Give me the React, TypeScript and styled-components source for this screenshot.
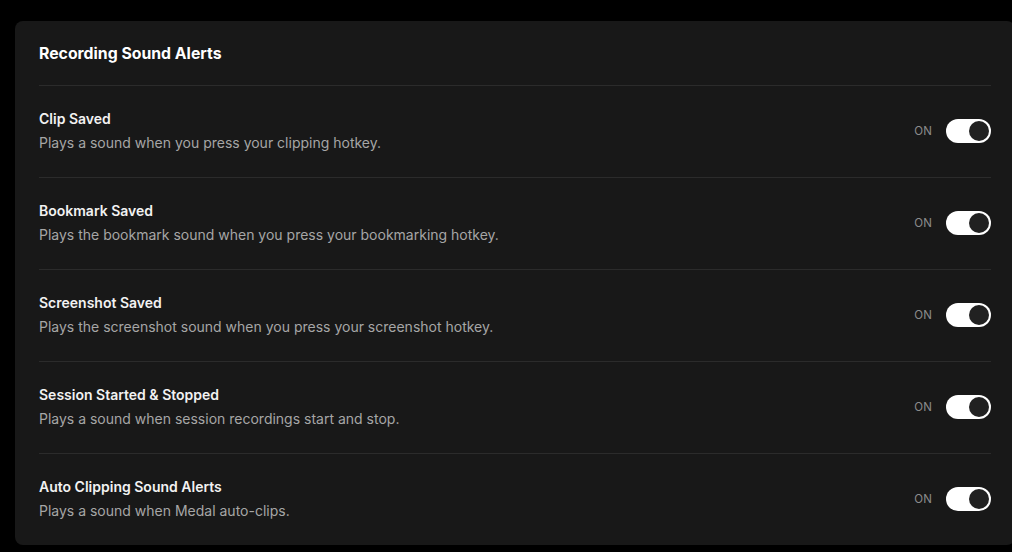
import React, { FC, useState } from 'react'
import styled, { createGlobalStyle } from 'styled-components'

const GlobalStyle = createGlobalStyle`
  html, body {
    margin: 0;
    padding: 0;
    background: #000;
    overflow: hidden;
  }
  body {
    font-family: Inter, "Noto Sans", sans-serif;
    -webkit-font-smoothing: antialiased;
  }
`

type Alert = {
  title: string
  description: string
}

const alerts: Alert[] = [
  { title: 'Clip Saved', description: 'Plays a sound when you press your clipping hotkey.' },
  {
    title: 'Bookmark Saved',
    description: 'Plays the bookmark sound when you press your bookmarking hotkey.',
  },
  {
    title: 'Screenshot Saved',
    description: 'Plays the screenshot sound when you press your screenshot hotkey.',
  },
  {
    title: 'Session Started & Stopped',
    description: 'Plays a sound when session recordings start and stop.',
  },
  { title: 'Auto Clipping Sound Alerts', description: 'Plays a sound when Medal auto-clips.' },
]

const StyledPage = styled.div`
  padding: 21px 0 0 15px;
  overflow: hidden;
`

// the card runs off the right edge of the window in the original
const StyledCard = styled.section`
  width: 1000px;
  background: #181818;
  border-radius: 8px;
  padding: 0 24px;
  box-sizing: border-box;
`

const StyledHeader = styled.h2`
  margin: 0;
  height: 64px;
  display: flex;
  align-items: center;
  font-size: 15.8px;
  font-weight: 700;
  color: #fff;
  border-bottom: 1px solid #2b2b2b;
`

const StyledRow = styled.div<{ $last: boolean }>`
  height: 89px;
  padding-bottom: 2px;
  display: flex;
  align-items: center;
  justify-content: space-between;
  border-bottom: ${p => (p.$last ? 'none' : '1px solid #2b2b2b')};
`

const StyledText = styled.div`
  display: flex;
  flex-direction: column;
  gap: 4px;
`

const StyledTitle = styled.div`
  font-size: 14px;
  line-height: 20px;
  font-weight: 600;
  color: #f2f2f2;
`

const StyledDescription = styled.div`
  font-size: 14px;
  line-height: 20px;
  color: #a6a6a6;
`

const StyledControl = styled.div`
  display: flex;
  align-items: center;
  gap: 14px;
`

const StyledState = styled.span`
  font-size: 11.5px;
  color: #8c8c8c;
  letter-spacing: 0.2px;
`

const StyledTrack = styled.button<{ $on: boolean }>`
  width: 45px;
  height: 24px;
  border: none;
  padding: 2px;
  border-radius: 12px;
  background: ${p => (p.$on ? '#fff' : '#3a3a3a')};
  display: flex;
  justify-content: ${p => (p.$on ? 'flex-end' : 'flex-start')};
  align-items: center;
  cursor: pointer;
  box-sizing: border-box;
`

const StyledKnob = styled.span`
  width: 20px;
  height: 20px;
  border-radius: 50%;
  background: #212121;
`

const Toggle: FC = () => {
  const [on, setOn] = useState(true)
  return (
    <StyledControl>
      <StyledState>{on ? 'ON' : 'OFF'}</StyledState>
      <StyledTrack $on={on} onClick={() => setOn(!on)}>
        <StyledKnob />
      </StyledTrack>
    </StyledControl>
  )
}

const App: FC = () => (
  <>
    <GlobalStyle />
    <StyledPage>
      <StyledCard>
        <StyledHeader>Recording Sound Alerts</StyledHeader>
        {alerts.map((alert, index) => (
          <StyledRow key={alert.title} $last={index === alerts.length - 1}>
            <StyledText>
              <StyledTitle>{alert.title}</StyledTitle>
              <StyledDescription>{alert.description}</StyledDescription>
            </StyledText>
            <Toggle />
          </StyledRow>
        ))}
      </StyledCard>
    </StyledPage>
  </>
)

export default App
